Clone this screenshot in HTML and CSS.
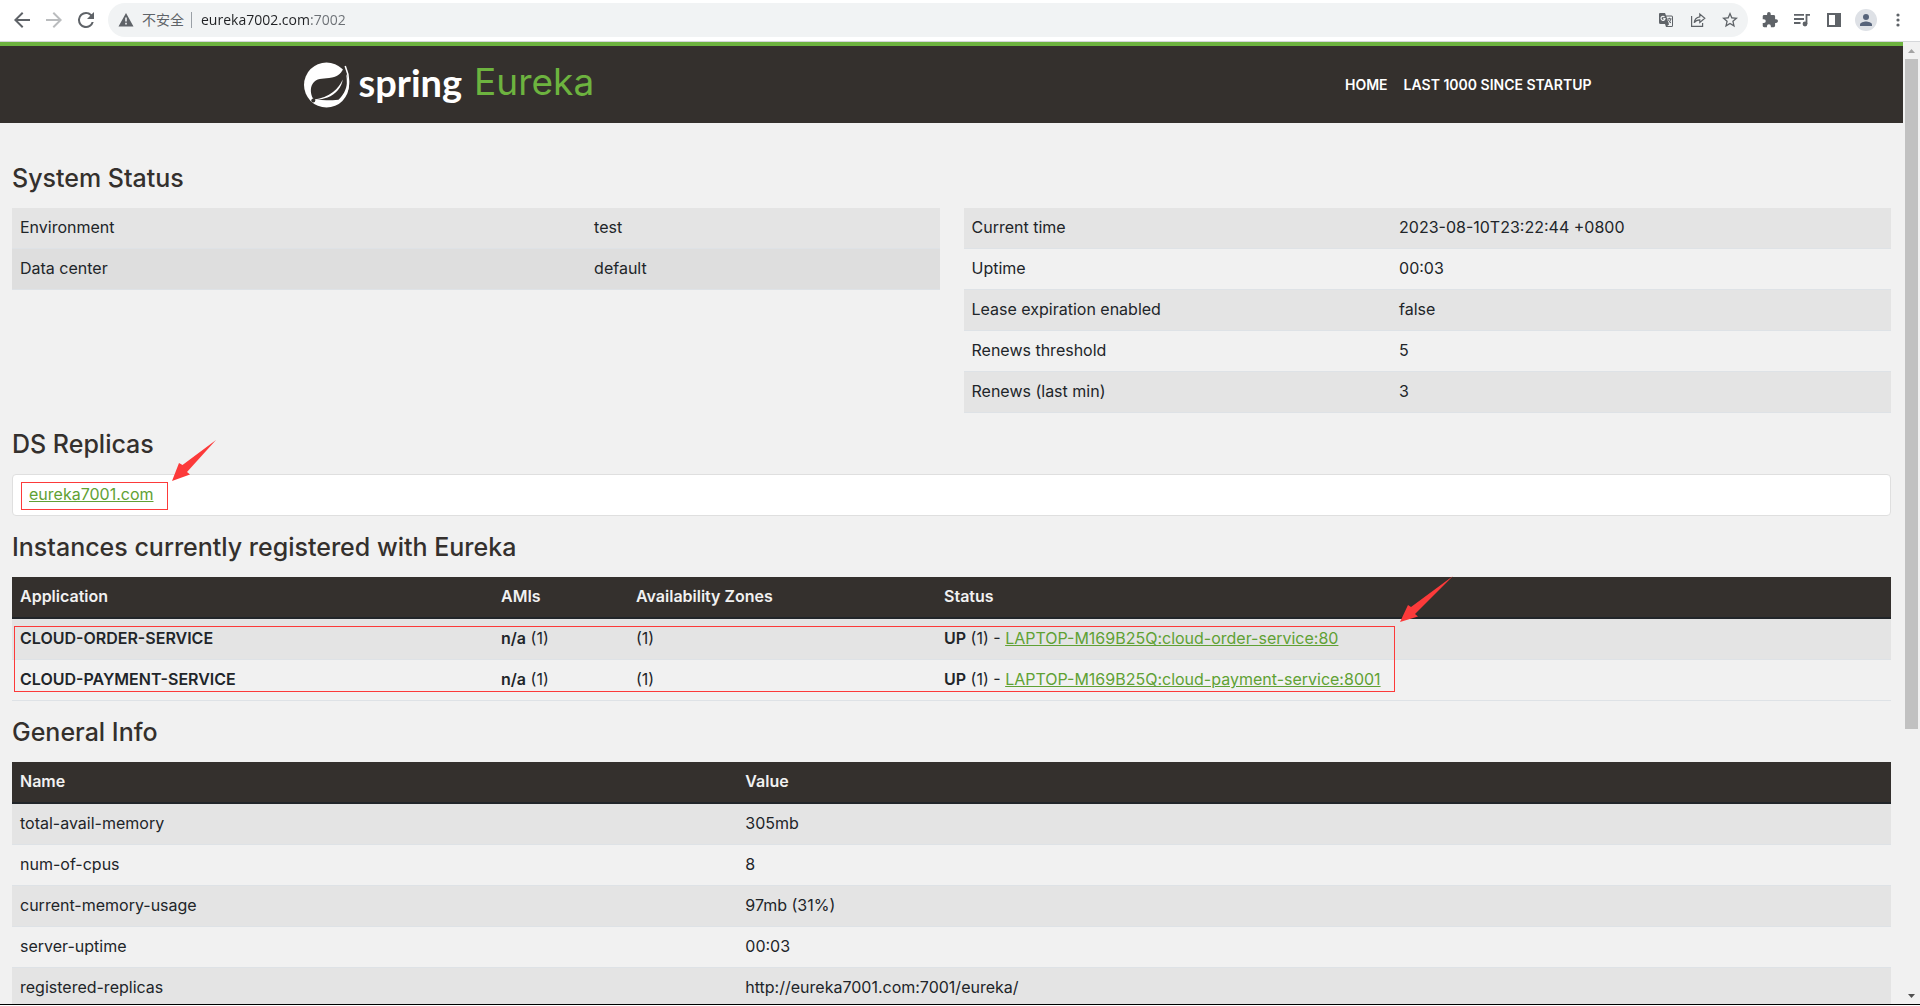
FILE: index.html
```html
<!DOCTYPE html>
<html lang="en">
<head>
<meta charset="utf-8">
<title>Eureka</title>
<link rel="stylesheet" href="styles.css">
</head>
<body>
<div class="toolbar">
  <button class="tool" type="button" aria-label="Back"><svg width="18" height="18" viewBox="3 3 18 18"><path d="M20 11H7.8l5.6-5.6L12 4l-8 8 8 8 1.4-1.4L7.8 13H20z"/></svg></button>
  <button class="tool tool-off" type="button" aria-label="Forward"><svg width="18" height="18" viewBox="3 3 18 18"><path d="M12 4l-1.4 1.4 5.6 5.6H4v2h12.2l-5.6 5.6L12 20l8-8z"/></svg></button>
  <button class="tool" type="button" aria-label="Reload"><svg width="18" height="18" viewBox="3 3 18 18"><path d="M17.65 6.35A7.96 7.96 0 0 0 12 4a8 8 0 1 0 7.73 10h-2.08A6 6 0 1 1 12 6c1.66 0 3.14.69 4.22 1.78L13 11h7V4z"/></svg></button>
  <form class="omnibox">
    <svg class="warn" width="16" height="16" viewBox="0 0 16 16"><path fill-rule="evenodd" d="M8 1l7.500 13.500H.5zM7.200 5.500v4h1.600v-4zM7.200 10.800v1.700h1.600v-1.700z"/></svg>
    <label class="insecure" for="url">不安全</label>
    <input class="url" id="url" type="text" value="eureka7002.com:7002">
    <button class="tool" type="button" aria-label="Translate"><svg width="16" height="16" viewBox="0 0 16 16"><path d="M2 1h5l1 2.500h5.500a1.500 1.500 0 0 1 1.500 1.500v8.500a1.500 1.500 0 0 1-1.500 1.500H8l-1-3H2.500A1.500 1.500 0 0 1 1 10.500V2a1 1 0 0 1 1-1z"/><path fill="#f1f3f4" d="M8.400 4.500l2.600 8-1.800 1.500h4.300a.5.5 0 0 0 .5-.5V5a.5.5 0 0 0-.5-.5z"/><path fill="none" stroke="#f1f3f4" stroke-width="1.200" d="M6.500 5A2 2 0 1 0 7 6.700H5.200"/><path fill="none" stroke="#5f6368" d="M9.500 6.800h4M11.500 5.800v1M10.200 7.500c.5 1.500 1.500 2.500 2.800 3.500M12.800 7c-.3 1.700-1 3-2.300 4"/></svg></button>
    <button class="tool" type="button" aria-label="Share"><svg width="16" height="16" viewBox="0 0 16 16"><path fill="none" stroke="#5f6368" stroke-width="1.200" d="M1.600 4v10.400h11V11M9.800 4.800V2l5 4.300-5 4.200V7.800c-2.800 0-4.300.9-5.600 3 .3-3.300 2.200-5.600 5.600-6z"/></svg></button>
    <button class="tool" type="button" aria-label="Bookmark"><svg width="16" height="16" viewBox="2 2 20 20"><path d="M22 9.240l-7.190-.62L12 2 9.190 8.630 2 9.240l5.460 4.730L5.820 21 12 17.270 18.180 21l-1.630-7.030zM12 15.400l-3.760 2.270 1-4.280-3.320-2.880 4.380-.38L12 6.100l1.710 4.040 4.380.38-3.320 2.880 1 4.280z"/></svg></button>
  </form>
  <button class="tool" type="button" aria-label="Extensions"><svg width="16" height="16" viewBox="1 1 22 22"><path d="M20.500 11H19V7a2 2 0 0 0-2-2h-4V3.500a2.500 2.500 0 0 0-5 0V5H4a2 2 0 0 0-2 2v3.800h1.500a2.700 2.700 0 0 1 0 5.400H2V20c0 1.100.9 2 2 2h3.800v-1.500a2.700 2.700 0 0 1 5.400 0V22H17a2 2 0 0 0 2-2v-4h1.500a2.500 2.500 0 0 0 0-5z"/></svg></button>
  <button class="tool" type="button" aria-label="Media"><svg width="18" height="18" viewBox="0 0 18 18"><path fill="none" stroke="#5f6368" stroke-width="1.800" d="M1 3.900h10M1 8h10M1 12h6.500M17 3.900h-3.500V13"/><circle cx="12" cy="13" r="2.400"/></svg></button>
  <button class="tool" type="button" aria-label="Side panel"><svg width="14" height="14" viewBox="0 0 14 14"><path fill-rule="evenodd" d="M0 0h14v14H0zM2 2v10h6V2z"/></svg></button>
  <button class="tool" type="button" aria-label="Profile"><svg width="22" height="22" viewBox="0 0 22 22"><circle cx="11" cy="11" r="11" fill="#dee1e6"/><circle cx="11" cy="8" r="3" fill="#56637a"/><path fill="#56637a" d="M5 17v-1.500c0-2 4-3 6-3s6 1 6 3V17z"/></svg></button>
  <button class="tool" type="button" aria-label="Menu"><svg width="4" height="14" viewBox="0 0 4 14"><circle cx="2" cy="2" r="1.600"/><circle cx="2" cy="7" r="1.600"/><circle cx="2" cy="12" r="1.600"/></svg></button>
</div>

<div class="viewport">
  <div class="page">
    <header class="header">
      <div class="container">
        <a class="brand" href="#">
          <svg width="46" height="46" viewBox="0 0 46 46"><circle cx="22.500" cy="23" r="22.500" fill="#fff"/><path fill="#34302d" d="M40.500 4C38 11 34 14.500 28 15.500 20 17 15 15.500 10 20c-4 4-4 11-1 16.500L10.500 37.500C17 36.500 24 34 29 30c4.500-3.600 8-8 9.700-12.500C38 25 31.500 32.500 23.500 35.500c-3.500 1.300-7 2-11 2.300 8 .7 15 .5 22-.1 5-4.700 8-10.700 8.300-16.200.2-6.500-.8-12-2.300-17.500z"/><circle cx="9.300" cy="38.500" r="2" fill="#34302d"/><path fill="none" stroke="#fff" stroke-width="1.600" d="M41.200 4c2.600 6 4 13 3 20-1 6-4 11-8 14.500"/></svg>
          <span class="spring">spring</span>
          <span class="eureka">Eureka</span>
        </a>
        <nav class="nav"><a href="#">HOME</a><a href="#">LAST 1000 SINCE STARTUP</a></nav>
      </div>
    </header>
    <main class="main">
      <h1>System Status</h1>
      <div class="status">
        <table class="table wide-key">
          <tr><td>Environment</td><td>test</td></tr>
          <tr class="hovered"><td>Data center</td><td>default</td></tr>
        </table>
        <table class="table narrow-key">
          <tr><td>Current time</td><td>2023-08-10T23:22:44 +0800</td></tr>
          <tr><td>Uptime</td><td>00:03</td></tr>
          <tr><td>Lease expiration enabled</td><td>false</td></tr>
          <tr><td>Renews threshold</td><td>5</td></tr>
          <tr><td>Renews (last min)</td><td>3</td></tr>
        </table>
      </div>

      <h1>DS Replicas</h1>
      <div class="panel">
        <a href="#">eureka7001.com</a>
        <div class="mark mark-replica"></div>
        <svg class="arrow arrow-replica" width="44" height="41" viewBox="0 0 44 41"><path d="M0 41L7 23l3.500 2L44 0 15 32l3 2.500z"/></svg>
      </div>

      <h1>Instances currently registered with Eureka</h1>
      <div class="instances">
        <table class="table apps">
          <thead><tr><th>Application</th><th>AMIs</th><th>Availability Zones</th><th>Status</th></tr></thead>
          <tbody>
            <tr><td><b>CLOUD-ORDER-SERVICE</b></td><td><b>n/a</b> (1)</td><td>(1)</td><td><b>UP</b> (1) - <a href="#">LAPTOP-M169B25Q:cloud-order-service:80</a></td></tr>
            <tr><td><b>CLOUD-PAYMENT-SERVICE</b></td><td><b>n/a</b> (1)</td><td>(1)</td><td><b>UP</b> (1) - <a href="#">LAPTOP-M169B25Q:cloud-payment-service:8001</a></td></tr>
          </tbody>
        </table>
        <div class="mark mark-apps"></div>
        <svg class="arrow arrow-apps" width="53" height="46" viewBox="0 0 53 46"><path d="M0 46L8 29l3 2L53 0 15 38l3 2.500z"/></svg>
      </div>

      <h1>General Info</h1>
      <table class="table info">
        <thead><tr><th>Name</th><th>Value</th></tr></thead>
        <tbody>
          <tr><td>total-avail-memory</td><td>305mb</td></tr>
          <tr><td>num-of-cpus</td><td>8</td></tr>
          <tr><td>current-memory-usage</td><td>97mb (31%)</td></tr>
          <tr><td>server-uptime</td><td>00:03</td></tr>
          <tr><td>registered-replicas</td><td>http://eureka7001.com:7001/eureka/</td></tr>
        </tbody>
      </table>
    </main>
  </div>
  <div class="scrollbar">
    <svg class="cap" width="17" height="17" viewBox="0 0 17 17"><path fill="#a3a3a3" d="M5 11l3.500-4 3.500 4z"/></svg>
    <div class="track"><div class="thumb"></div></div>
    <svg class="cap" width="17" height="17" viewBox="0 0 17 17"><path fill="#505050" d="M5 7l3.500 4L12 7z"/></svg>
  </div>
</div>
<div class="window-edge"></div>
</body>
</html>
```
FILE: styles.css
```css
* { box-sizing: border-box; }

body {
  margin: 0;
  height: 100vh;
  display: flex;
  flex-direction: column;
  overflow: hidden;
  background: #f1f1f1;
  color: #212529;
  font: 16px/24px Inter, "Noto Sans", sans-serif;
}

/* browser toolbar */
.toolbar {
  display: flex;
  align-items: center;
  flex: none;
  height: 42px;
  padding: 0 6px 2px;
  background: #fff;
  border-bottom: 1px solid #d5d7da;
}
.tool {
  display: flex;
  align-items: center;
  justify-content: center;
  width: 32px;
  height: 32px;
  padding: 0;
  border: 0;
  background: none;
  fill: #5f6368;
}
.tool-off { fill: #babcbe; }
.omnibox {
  display: flex;
  align-items: center;
  flex: 1;
  height: 34px;
  margin: 0 6px;
  padding: 0 2px 0 10px;
  border-radius: 17px;
  background: #f1f3f4;
}
.warn { fill: #5f6368; }
.insecure {
  margin-left: 8px;
  padding-right: 7px;
  border-right: 1px solid #9aa0a6;
  color: #5f6368;
  font: 14px/16px "Open Sans", "Noto Sans CJK SC", sans-serif;
}
.url {
  flex: 1;
  min-width: 0;
  margin-left: 9px;
  padding: 0;
  border: 0;
  font: 14px/20px "Open Sans", sans-serif;
  background: linear-gradient(90deg, #202124 110px, #6b6f74 110px);
  background-clip: text;
  -webkit-background-clip: text;
  -webkit-text-fill-color: transparent;
}

/* page area and its scrollbar */
.viewport {
  display: flex;
  flex: 1;
  min-height: 0;
}
.page {
  flex: 1;
  min-width: 0;
  overflow: hidden;
}
.scrollbar {
  display: flex;
  flex-direction: column;
  flex: none;
  width: 17px;
  background: #f1f1f1;
}
.cap { flex: none; }
.track { flex: 1; }
.thumb {
  width: 13px;
  height: 72.2%;
  margin: 0 auto;
  background: #c1c1c1;
}
.window-edge {
  flex: none;
  height: 2px;
  border-top: 1px solid #000;
  background: #fff;
}

/* header */
.header {
  border-top: 4px solid #6db33f;
  background: #34302d;
}
.container {
  display: flex;
  align-items: center;
  justify-content: space-between;
  max-width: 1320px;
  height: 77px;
  margin: 0 auto;
  padding: 0 20px 0 12px;
}
.brand {
  display: flex;
  align-items: center;
  text-decoration: none;
}
.spring,
.eureka { padding-bottom: 6px; }
.spring {
  margin-left: 9px;
  color: #fff;
  font: bold 38px/46px Lato, sans-serif;
}
.eureka {
  margin-left: 12px;
  color: #6db33f;
  font: 400 37px/46px Inter, sans-serif;
}
.nav {
  display: flex;
  gap: 16px;
}
.nav a {
  color: #fff;
  font: 600 14px/20px Inter, sans-serif;
  text-decoration: none;
}

/* content */
.main { padding: 24px 12px 0; }
h1 {
  margin: 17px 0 15px;
  color: #34302d;
  font: 500 25px/29px Inter, sans-serif;
}
a { color: #5fa134; }
b { font-weight: 600; }

.table {
  width: 100%;
  border-spacing: 0;
  table-layout: fixed;
}
.table th,
.table td {
  height: 41px;
  padding: 7px 8px 9px;
  border-bottom: 1px solid #dee2e6;
  text-align: left;
  vertical-align: top;
}
.table th {
  height: 42px;
  background: #34302d;
  border-bottom: 2px solid #212529;
  color: #f1f1f1;
  font-weight: 600;
}
.table tr:nth-child(odd) td { background: #e4e4e4; }
.table .hovered td { background: #dedede; }

.status {
  display: grid;
  grid-template-columns: 1fr 1fr;
  align-items: start;
  gap: 24px;
}
.wide-key td:first-child { width: 61.9%; }
.narrow-key td:first-child { width: 46.1%; }
.info th:first-child { width: 38.6%; }
.apps th:nth-child(1) { width: 481px; }
.apps th:nth-child(2) { width: 135px; }
.apps th:nth-child(3) { width: 308px; }

.panel {
  position: relative;
  padding: 7px 16px 9px;
  background: #fff;
  border: 1px solid #dfdfdf;
  border-radius: 4px;
}
.instances { position: relative; }

/* red annotations over the content */
.mark {
  position: absolute;
  border: 1px solid #fc3a3a;
  pointer-events: none;
}
.mark-replica { left: 8px; top: 7px; width: 147px; height: 28px; }
.mark-apps { left: 2px; top: 49px; width: 1381px; height: 66px; }
.arrow {
  position: absolute;
  fill: #fc3a3a;
}
.arrow-replica { left: 159px; top: -35px; }
.arrow-apps { left: 1388px; top: -1px; }
```
